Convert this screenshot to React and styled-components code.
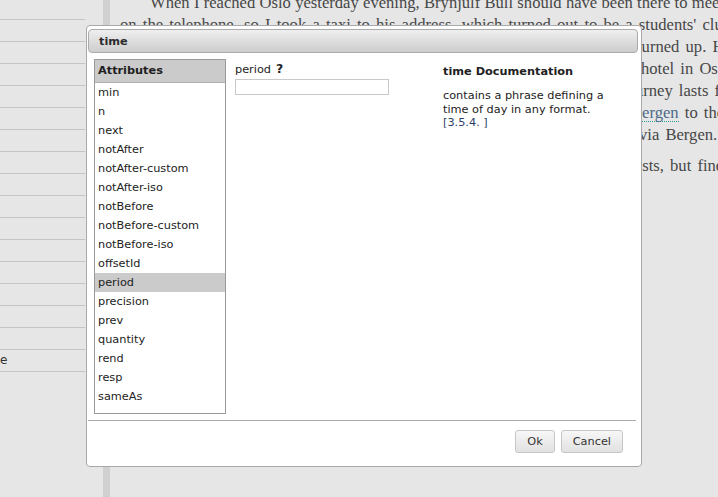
import React from 'react';
import styled, { createGlobalStyle } from 'styled-components';

const GlobalStyle = createGlobalStyle`
  html, body {
    margin: 0;
    padding: 0;
  }
  body {
    background: #e6e6e6;
    overflow: hidden;
  }
`;

const Page = styled.div`
  position: relative;
  display: flex;
  width: 718px;
  height: 497px;
  overflow: hidden;
  background: #e6e6e6;
`;

// left outline panel
const Sidebar = styled.div`
  flex: 0 0 103px;
  margin-top: -2px;
`;

const SideRow = styled.div`
  width: 85px;
  height: 21px;
  border-bottom: 1px solid #c4c4c4;
  font: 12px/21px "DejaVu Sans", sans-serif;
  color: #333;
  white-space: nowrap;
  overflow: hidden;
`;

const ScrollEdge = styled.div`
  flex: 0 0 7px;
  background: #d0d0d0;
`;

// document text behind the dialog
const Main = styled.div`
  flex: 1;
  padding-left: 10px;
  overflow: hidden;
  font-family: "Liberation Serif", "Times New Roman", serif;
  font-size: 16.6px;
  line-height: 22px;
  color: #474747;
`;

const Para = styled.div`
  margin-top: ${p => p.$top || 0}px;
`;

const FullLine = styled.div`
  width: ${p => p.$w}px;
  height: 22px;
  overflow: hidden;
  word-spacing: -4px;
  text-align: justify;
  text-align-last: justify;
  text-indent: ${p => p.$indent || 0}px;
`;

const Line = styled.div`
  display: flex;
  height: 22px;
  white-space: nowrap;
`;

const Covered = styled.span`
  flex: 0 0 ${p => p.$w}px;
  overflow: hidden;
`;

const Tail = styled.span`
  word-spacing: ${p => p.$ws || 0}px;
`;

const Place = styled.span`
  color: #4d6a86;
  border-bottom: 1px dotted #2f9a9a;
  line-height: 17px;
  display: inline-block;
`;

// dialog
const Dialog = styled.div`
  position: absolute;
  left: 86px;
  top: 25px;
  width: 556px;
  box-sizing: border-box;
  border: 1px solid #a9a9a9;
  border-radius: 4px;
  background: #fff;
  padding: 3px 3px 0 1px;
  font-family: "DejaVu Sans", Verdana, sans-serif;
  font-size: 11.3px;
  color: #222;
`;

const TitleBar = styled.div`
  height: 22px;
  border: 1px solid #ababab;
  border-radius: 4px;
  background: linear-gradient(#efefef, #cdcdcd);
  padding-left: 10px;
  font-weight: bold;
  line-height: 23px;
  color: #2b2b2b;
`;

const Body = styled.div`
  display: flex;
  height: 355px;
  padding: 6px 0 6px 6px;
`;

const AttrList = styled.div`
  flex: 0 0 132px;
  box-sizing: border-box;
  border: 1px solid #9a9a9a;
  overflow: hidden;
`;

const AttrHead = styled.div`
  height: 22px;
  line-height: 22px;
  padding-left: 3px;
  background: #cbcbcb;
  border-bottom: 1px solid #b0b0b0;
  font-weight: bold;
  color: #1e1e1e;
`;

const AttrItem = styled.div`
  height: 19px;
  line-height: 19px;
  padding-left: 3px;
  background: ${p => (p.$active ? '#cbcbcb' : 'transparent')};
  white-space: nowrap;
`;

const Form = styled.div`
  flex: 0 0 154px;
  margin-left: 9px;
  padding-top: 2px;
`;

const FieldLabel = styled.div`
  line-height: 15px;
  color: #222;
`;

const Help = styled.span`
  font-weight: bold;
  font-size: 12.5px;
  margin-left: 5px;
`;

const Input = styled.input`
  display: block;
  box-sizing: border-box;
  width: 154px;
  height: 16px;
  margin: 2px 0 0;
  padding: 0 2px;
  border: 1px solid #c9c9c9;
  outline: none;
  font: inherit;
`;

const Docs = styled.div`
  flex: 0 0 175px;
  margin-left: 54px;
  padding-top: 6px;
`;

const DocsTitle = styled.div`
  font-weight: bold;
  line-height: 14px;
  color: #222;
`;

const DocsText = styled.div`
  margin-top: 10px;
  line-height: 13.5px;
  color: #222;
`;

const Ref = styled.span`
  color: #2f3f6a;
`;

const Footer = styled.div`
  display: flex;
  justify-content: flex-end;
  gap: 6px;
  margin-right: 2px;
  padding: 9px 13px 13px 0;
  border-top: 1px solid #ababab;
`;

const Button = styled.button`
  height: 23px;
  padding: 0 ${p => p.$pad}px;
  border: 1px solid #c6c6c6;
  border-radius: 3px;
  background: linear-gradient(#f7f7f7, #e1e1e1);
  font-family: "DejaVu Sans", Verdana, sans-serif;
  font-size: 11.3px;
  color: #333;
`;

const sideRows = Array.from({ length: 17 }, (_, i) => (i === 16 ? 'e' : ''));

const attributes = [
  'min', 'n', 'next', 'notAfter', 'notAfter-custom', 'notAfter-iso',
  'notBefore', 'notBefore-custom', 'notBefore-iso', 'offsetId', 'period',
  'precision', 'prev', 'quantity', 'rend', 'resp', 'sameAs', 'scope',
];

export default function App() {
  return (
    <>
      <GlobalStyle />
      <Page>
        <Sidebar>
          {sideRows.map((t, i) => (
            <SideRow key={i}>{t}</SideRow>
          ))}
        </Sidebar>
        <ScrollEdge />
        <Main>
          <Para $top={-8}>
            <FullLine $w={604} $indent={30}>
              When I reached Oslo yesterday evening, Brynjulf Bull should have been there to meet
            </FullLine>
            <FullLine $w={611}>
              on the telephone, so I took a taxi to his address, which turned out to be a students' club
            </FullLine>
            <Line>
              <Covered $w={517}>hostel. I waited there for an hour, but nobody</Covered>
              <Tail $ws={2}>turned up. He</Tail>
            </Line>
            <Line>
              <Covered $w={521}>had left a message that I should stay at a</Covered>
              <Tail $ws={2}>hotel in Oslo</Tail>
            </Line>
            <Line>
              <Covered $w={502}>and take the train to the west coast. The</Covered>
              <Tail $ws={2}>journey lasts from</Tail>
            </Line>
            <Line>
              <Covered $w={511}>Oslo over the mountains down to</Covered>
              <Tail $ws={2}>
                <Place>Bergen</Place> to the
              </Tail>
            </Line>
            <Line>
              <Covered $w={519}>coast, and the boats leave from there, so I travel</Covered>
              <Tail $ws={2}>via Bergen.</Tail>
            </Line>
          </Para>
          <Para $top={9}>
            <Line>
              <Covered $w={513}>I have looked through the timetables and</Covered>
              <Tail $ws={2}>lists, but find</Tail>
            </Line>
          </Para>
        </Main>

        <Dialog>
          <TitleBar>time</TitleBar>
          <Body>
            <AttrList>
              <AttrHead>Attributes</AttrHead>
              {attributes.map(a => (
                <AttrItem key={a} $active={a === 'period'}>
                  {a}
                </AttrItem>
              ))}
            </AttrList>
            <Form>
              <FieldLabel>
                period<Help>?</Help>
              </FieldLabel>
              <Input type="text" />
            </Form>
            <Docs>
              <DocsTitle>time Documentation</DocsTitle>
              <DocsText>
                contains a phrase defining a time of day in any format.
                <br />
                <Ref>[3.5.4. ]</Ref>
              </DocsText>
            </Docs>
          </Body>
          <Footer>
            <Button $pad={11}>Ok</Button>
            <Button $pad={11}>Cancel</Button>
          </Footer>
        </Dialog>
      </Page>
    </>
  );
}
